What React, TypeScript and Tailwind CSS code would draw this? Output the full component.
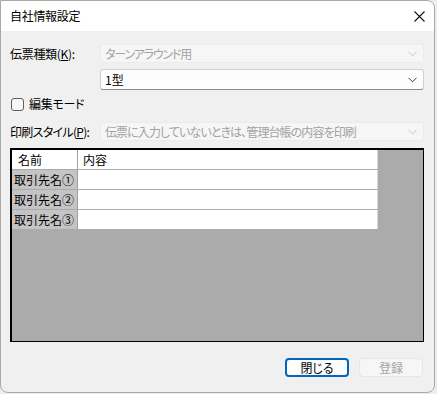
import React from "react";

function Chevron({ disabled }: { disabled?: boolean }) {
  return (
    <svg width="9" height="6" viewBox="0 0 9 6" className="shrink-0">
      <path d="M0.5 0.8 L4.5 4.8 L8.5 0.8" fill="none" stroke={disabled ? "#c4c4c4" : "#3a3a3a"} strokeWidth="1" />
    </svg>
  );
}

function Select({ text, disabled, h, track }: { text: string; disabled?: boolean; h: string; track?: string }) {
  return (
    <div
      className={
        "w-[324px] flex items-center justify-between pl-[4px] pr-[6px] rounded-[3px] border " +
        h +
        " " +
        (disabled
          ? "bg-[#f6f6f6] border-[#ebebeb] text-[#a2a2a2]"
          : "bg-[#fdfdfd] border-[#cfcfcf] border-b-[#8a8a8a] text-black")
      }
    >
      <span className={"text-[12px] leading-none whitespace-nowrap " + (track ?? "")}>{text}</span>
      <Chevron disabled={disabled} />
    </div>
  );
}

const rows = ["取引先名①", "取引先名②", "取引先名③"];

export default function App() {
  return (
    <div className="w-[437px] h-[394px] bg-[#ececec] font-['Noto_Sans_CJK_JP','Noto_Sans',sans-serif] [font-feature-settings:'palt'] text-black">
      <div className="w-[435px] h-[393px] bg-[#f0f0f0] border border-[#a9a9a9] rounded-tr-[8px] rounded-b-[8px] overflow-hidden flex flex-col">
        {/* title bar */}
        <div className="h-[30px] bg-white flex items-center justify-between pl-[9px] pr-[9px] shrink-0">
          <span className="text-[12px] leading-none tracking-[-0.3px]">自社情報設定</span>
          <svg width="11" height="11" viewBox="0 0 11 11">
            <path d="M0.5 0.5 L10.5 10.5 M10.5 0.5 L0.5 10.5" stroke="#111" strokeWidth="1.1" />
          </svg>
        </div>

        <div className="flex flex-col pl-[9px] pt-[13px]">
          {/* row 1 */}
          <div className="flex items-center h-[19px]">
            <span className="w-[90px] text-[12px] leading-none tracking-[-0.3px]">
              伝票種類(<span className="underline">K</span>):
            </span>
            <Select text="ターンアラウンド用" disabled h="h-[19px]" track="tracking-[-1.2px]" />
          </div>
          {/* row 2 */}
          <div className="flex items-center h-[21px] mt-[6px]">
            <span className="w-[90px]" />
            <Select text="1型" h="h-[21px]" />
          </div>
          {/* checkbox */}
          <div className="flex items-center h-[16px] mt-[6px] pl-[1px]">
            <div className="w-[13px] h-[13px] rounded-[3px] border border-[#5e5e5e] bg-[#f8f8f8]" />
            <span className="ml-[5px] text-[12px] leading-none tracking-[-0.3px]">編集モード</span>
          </div>
          {/* row 4 */}
          <div className="flex items-center h-[19px] mt-[10px]">
            <span className="w-[90px] text-[12px] leading-none whitespace-nowrap tracking-[-0.7px]">
              印刷スタイル(<span className="underline">P</span>):
            </span>
            <Select text="伝票に入力していないときは、管理台帳の内容を印刷" disabled h="h-[19px]" track="tracking-[-0.9px]" />
          </div>

          {/* grid */}
          <div className="mt-[7px] w-[414px] h-[194px] bg-[#ababab] border border-black border-t-2 border-l-2">
            <div className="flex flex-col w-[366px]">
              <div className="flex h-[20px]">
                <div className="w-[66px] h-[19px] bg-white border-r border-[#a0a0a0] pl-[6px] flex items-center text-[12px] leading-none">名前</div>
                <div className="w-[300px] h-[19px] bg-white border-r border-[#d8d8d8] pl-[5px] flex items-center text-[12px] leading-none">内容</div>
              </div>
              {rows.map((r) => (
                <div key={r} className="flex h-[20px]">
                  <div className="w-[66px] h-[19px] bg-[#c4c4c4] border-r border-[#a0a0a0] pl-[2px] flex items-center text-[12px] leading-none whitespace-nowrap">{r}</div>
                  <div className="w-[300px] h-[19px] bg-white border-r border-[#d8d8d8]" />
                </div>
              ))}
            </div>
          </div>

          {/* buttons */}
          <div className="mt-[16px] flex justify-end w-[413px] gap-[10px]">
            <div className="w-[64px] h-[19px] rounded-[4px] border-2 border-[#0067c0] bg-[#fdfdfd] flex items-center justify-center text-[12px] leading-none">閉じる</div>
            <div className="w-[64px] h-[19px] rounded-[4px] border border-[#e6e6e6] bg-[#f6f6f6] flex items-center justify-center text-[12px] leading-none text-[#a5a5a5]">登録</div>
          </div>
        </div>
      </div>
    </div>
  );
}
